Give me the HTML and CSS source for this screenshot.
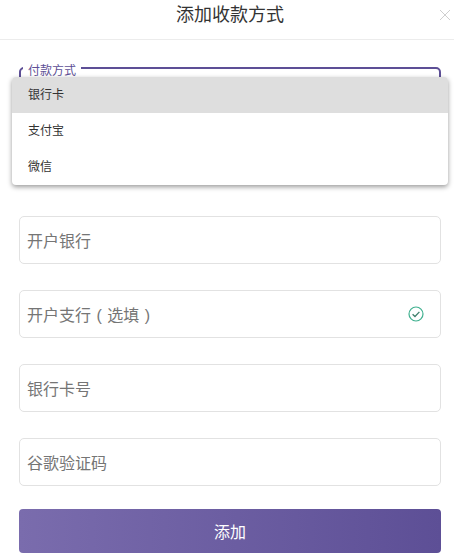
FILE: index.html
```html
<!DOCTYPE html>
<html lang="en">
<head>
    <meta charset="UTF-8">
    <meta name="viewport" content="width=device-width, initial-scale=1.0">
    <title>添加收款方式</title>
    <link rel="stylesheet" href="styles.css">
</head>
<body>

<!-- Header -->
<header class="header">
    <h1 class="title">添加收款方式</h1>
    <svg class="close" width="12" height="12" viewBox="0 0 12 12" aria-hidden="true">
        <path d="M1 1L11 11M11 1L1 11" stroke="#cfcfcf" stroke-width="1" fill="none"/>
    </svg>
</header>

<form class="form">
    <!-- Payment type select, open -->
    <div class="select-wrap">
        <div class="field field-focus">
            <span class="field-label">付款方式</span>
        </div>
        <ul class="menu">
            <li class="menu-item menu-item-active">银行卡</li>
            <li class="menu-item">支付宝</li>
            <li class="menu-item">微信</li>
        </ul>
    </div>

    <div class="field"><span class="placeholder">开户银行</span></div>

    <div class="field">
        <span class="placeholder placeholder-spaced">开户支行 ( 选填 )</span>
        <svg class="check" width="16" height="16" viewBox="0 0 16 16" aria-hidden="true">
            <circle cx="8" cy="8" r="7" stroke="#3fb08f" stroke-width="1.2" fill="none"/>
            <path d="M4.6 8.2L7 10.5L11.4 5.9" stroke="#3f7f6c" stroke-width="1.3" fill="none"/>
        </svg>
    </div>

    <div class="field"><span class="placeholder">银行卡号</span></div>
    <div class="field"><span class="placeholder">谷歌验证码</span></div>

    <button class="submit" type="button">添加</button>
</form>

</body>
</html>
```

FILE: styles.css
```css
html, body {
    height: 100%;
    margin: 0;
    overflow: hidden;
}

body {
    background-color: #ffffff;
    font-family: "Liberation Sans", "Noto Sans CJK SC", sans-serif;
}

/* Header */
.header {
    position: relative;
    height: 39px;
    border-bottom: 1px solid #ececec;
    display: flex;
    justify-content: center;
}

.title {
    margin: 0;
    padding-left: 6px;
    font-size: 18px;
    font-weight: 400;
    line-height: 30px;
    color: #333333;
}

.close {
    position: absolute;
    top: 9px;
    right: 3px;
}

/* Form */
.form {
    display: flex;
    flex-direction: column;
    gap: 26px;
    padding: 27px 13px 0 19px;
}

.field {
    box-sizing: border-box;
    height: 48px;
    padding: 0 16px 0 7px;
    border: 1px solid #e2e2e2;
    border-radius: 5px;
    display: flex;
    align-items: center;
    justify-content: space-between;
}

.placeholder {
    font-size: 16px;
    color: #757575;
}

.placeholder-spaced {
    word-spacing: 1px;
}

.check {
    flex-shrink: 0;
}

/* Select */
.select-wrap {
    position: relative;
    margin-bottom: 75px;
}

.field-focus {
    position: relative;
    border: 2px solid #5d4f96;
}

.field-label {
    position: absolute;
    top: -6px;
    left: 2px;
    padding: 0 5px;
    background-color: #ffffff;
    font-size: 12px;
    line-height: 16px;
    color: #5d4f96;
}

.menu {
    position: absolute;
    top: 10px;
    left: -7px;
    width: 436px;
    margin: 0;
    padding: 0;
    list-style: none;
    background-color: #ffffff;
    border-radius: 4px;
    overflow: hidden;
    box-shadow: 0 2px 5px rgba(0, 0, 0, 0.4);
}

.menu-item {
    height: 36px;
    padding-left: 16px;
    font-size: 12px;
    line-height: 36px;
    color: #333333;
}

.menu-item-active {
    background-color: #dedede;
}

/* Submit button */
.submit {
    height: 44px;
    margin-top: -3px;
    padding: 0;
    border: none;
    border-radius: 4px;
    background: linear-gradient(to right, #7a6cad, #5d4f96);
    font-family: inherit;
    font-size: 16px;
    color: #ffffff;
    cursor: pointer;
}
```
